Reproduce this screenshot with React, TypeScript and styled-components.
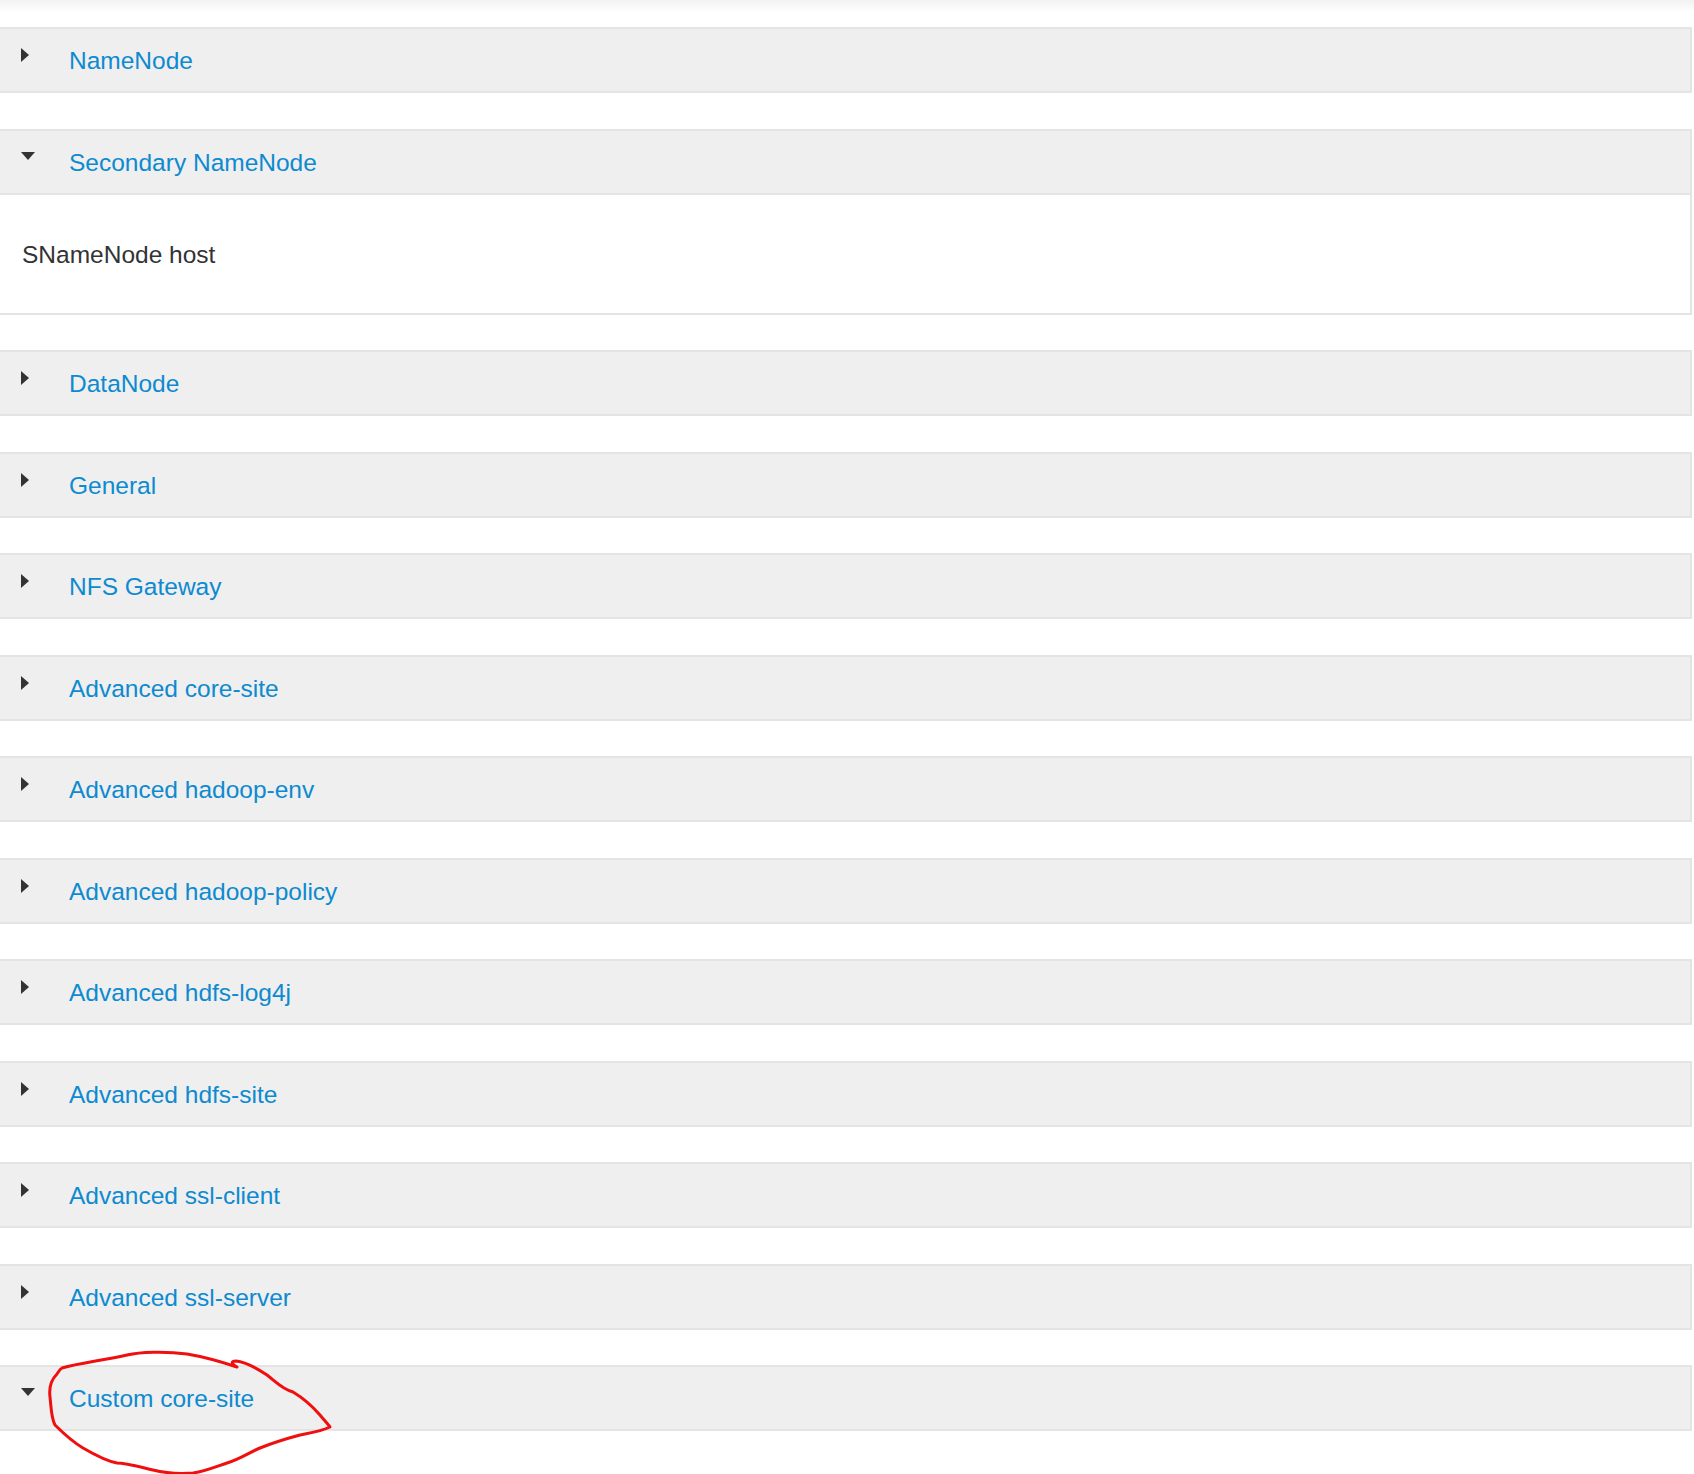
import { FC } from "react";
import styled, { createGlobalStyle } from "styled-components";

const GlobalStyle = createGlobalStyle`
  html, body {
    margin: 0;
    padding: 0;
    background: #fff;
  }

  body {
    font-family: "Liberation Sans", Arial, sans-serif;
  }
`;

interface Section {
  title: string;
  open?: boolean;
  body?: string;
}

const sections: Section[] = [
  { title: "NameNode" },
  { title: "Secondary NameNode", open: true, body: "SNameNode host" },
  { title: "DataNode" },
  { title: "General" },
  { title: "NFS Gateway" },
  { title: "Advanced core-site" },
  { title: "Advanced hadoop-env" },
  { title: "Advanced hadoop-policy" },
  { title: "Advanced hdfs-log4j" },
  { title: "Advanced hdfs-site" },
  { title: "Advanced ssl-client" },
  { title: "Advanced ssl-server" },
  { title: "Custom core-site", open: true },
];

const Page = styled.div`
  position: relative;
  min-height: 1474px;
  padding-top: 27px;
  box-sizing: border-box;
  overflow: hidden;
`;

const TopShade = styled.div`
  position: absolute;
  top: 0;
  left: 0;
  right: 0;
  height: 12px;
  background: linear-gradient(#f2f2f2, rgba(255, 255, 255, 0));
`;

const Panel = styled.div`
  margin: 0 2px 35.5px -2px;
  border: 2px solid #e4e4e4;
  background: #fff;
`;

const Heading = styled.div<{ $divided?: boolean }>`
  display: flex;
  align-items: center;
  height: 62px;
  background: #efefef;
  border-bottom: ${({ $divided }) => ($divided ? "2px solid #e4e4e4" : "none")};
`;

const Toggle = styled.div<{ $open?: boolean }>`
  flex: 0 0 69px;
  align-self: flex-start;
  box-sizing: border-box;
  padding-left: 21px;
  padding-top: ${({ $open }) => ($open ? "21px" : "19px")};
  display: flex;
`;

const Caret = styled.span<{ $open?: boolean }>`
  width: 0;
  height: 0;
  ${({ $open }) =>
    $open
      ? `
    border-top: 8px solid #333;
    border-left: 7px solid transparent;
    border-right: 7px solid transparent;
  `
      : `
    border-left: 8px solid #333;
    border-top: 7px solid transparent;
    border-bottom: 7px solid transparent;
  `}
`;

const Title = styled.a`
  padding-top: 2px;
  font-size: 24.5px;
  line-height: 28px;
  color: #0d8ad0;
  text-decoration: none;
  cursor: pointer;
`;

const Body = styled.div`
  padding: 46px 22px 44px;
  font-size: 24.5px;
  line-height: 28px;
  color: #333;
`;

const Annotation = styled.svg`
  position: absolute;
  top: 0;
  left: 0;
  pointer-events: none;
`;

const loop =
  "M62 1368 C80 1363 100 1361 127 1355 C140 1352 165 1351 187 1354 C205 1357 222 1362 237 1367 " +
  "C232 1364 230 1361 236 1361 C245 1362 258 1369 267 1375 C276 1382 282 1389 293 1392 " +
  "C303 1398 313 1407 320 1415 C324 1420 328 1424 330 1427 C322 1431 310 1433 300 1435 " +
  "C285 1439 270 1444 260 1448 C250 1452 240 1459 227 1463 C215 1467 203 1472 193 1473 " +
  "C180 1474 165 1473 153 1470 C140 1467 126 1463 117 1463 C106 1461 95 1455 83 1448 " +
  "C73 1442 62 1432 55 1425 C51 1418 51 1405 50 1397 C49 1389 51 1380 57 1374 C59 1371 60 1369 62 1368 Z";

const App: FC = () => {
  return (
    <Page>
      <GlobalStyle />
      <TopShade />

      {sections.map((section) => (
        <Panel key={section.title}>
          <Heading $divided={!!section.body}>
            <Toggle $open={section.open}>
              <Caret $open={section.open} />
            </Toggle>
            <Title>{section.title}</Title>
          </Heading>

          {section.body && <Body>{section.body}</Body>}
        </Panel>
      ))}

      <Annotation width="1694" height="1474" viewBox="0 0 1694 1474">
        <path
          d={loop}
          fill="none"
          stroke="#f00f0f"
          strokeWidth="3"
          strokeLinejoin="round"
          strokeLinecap="round"
        />
      </Annotation>
    </Page>
  );
};

export default App;
